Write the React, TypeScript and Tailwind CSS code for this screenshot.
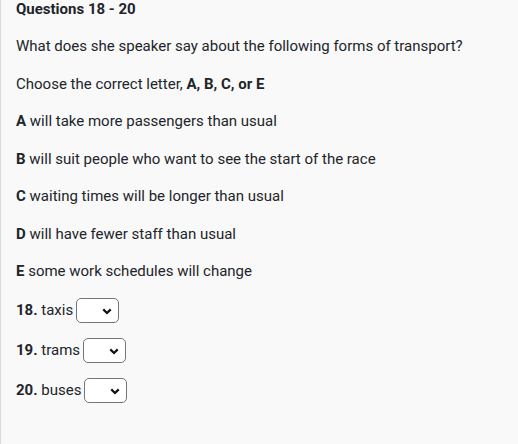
import React from "react";

const options = ["A", "B", "C", "D", "E"];

function Sel() {
  return (
    <span className="relative ml-[3px] inline-block h-[25px] w-[43px]">
      <select
        defaultValue=""
        className="block h-[25px] w-[43px] appearance-none rounded-[5px] border border-[#767676] bg-white text-[13px] text-transparent"
      >
        <option value=""></option>
        {options.map((o) => (
          <option key={o} value={o}>
            {o}
          </option>
        ))}
      </select>
      <svg
        className="pointer-events-none absolute left-[26px] top-[10px]"
        width="10"
        height="7"
        viewBox="0 0 10 7"
      >
        <path d="M1.3 1.4 L5 5 L8.7 1.4" fill="none" stroke="#111" strokeWidth="2.2" />
      </svg>
    </span>
  );
}

export default function App() {
  const items: [string, string][] = [
    ["A", "will take more passengers than usual"],
    ["B", "will suit people who want to see the start of the race"],
    ["C", "waiting times will be longer than usual"],
    ["D", "will have fewer staff than usual"],
    ["E", "some work schedules will change"],
  ];
  const qs: [string, string][] = [
    ["18.", "taxis"],
    ["19.", "trams"],
    ["20.", "buses"],
  ];
  return (
    <div
      className="min-h-screen border-l border-[#d9d9d9] bg-[#f9f9f9] pl-[15px] text-[15px] text-[#212529]"
      style={{ fontFamily: "Roboto, 'Liberation Sans', sans-serif" }}
    >
      <div className="text-[15px] font-bold leading-[18px]">Questions 18 - 20</div>
      <p className="mt-[17px] leading-[22.5px]">
        What does she speaker say about the following forms of transport?
      </p>
      <p className="mt-[15px] leading-[22.5px]">
        Choose the correct letter, <b>A, B, C, or E</b>
      </p>
      {items.map(([l, t]) => (
        <p key={l} className="mt-[15px] leading-[22.5px]">
          <b>{l}</b> {t}
        </p>
      ))}
      {qs.map(([n, t]) => (
        <div key={n} className="mt-[15px] flex items-center leading-[22.5px]">
          <span>
            <b>{n}</b> {t}
          </span>
          <Sel />
        </div>
      ))}
    </div>
  );
}
